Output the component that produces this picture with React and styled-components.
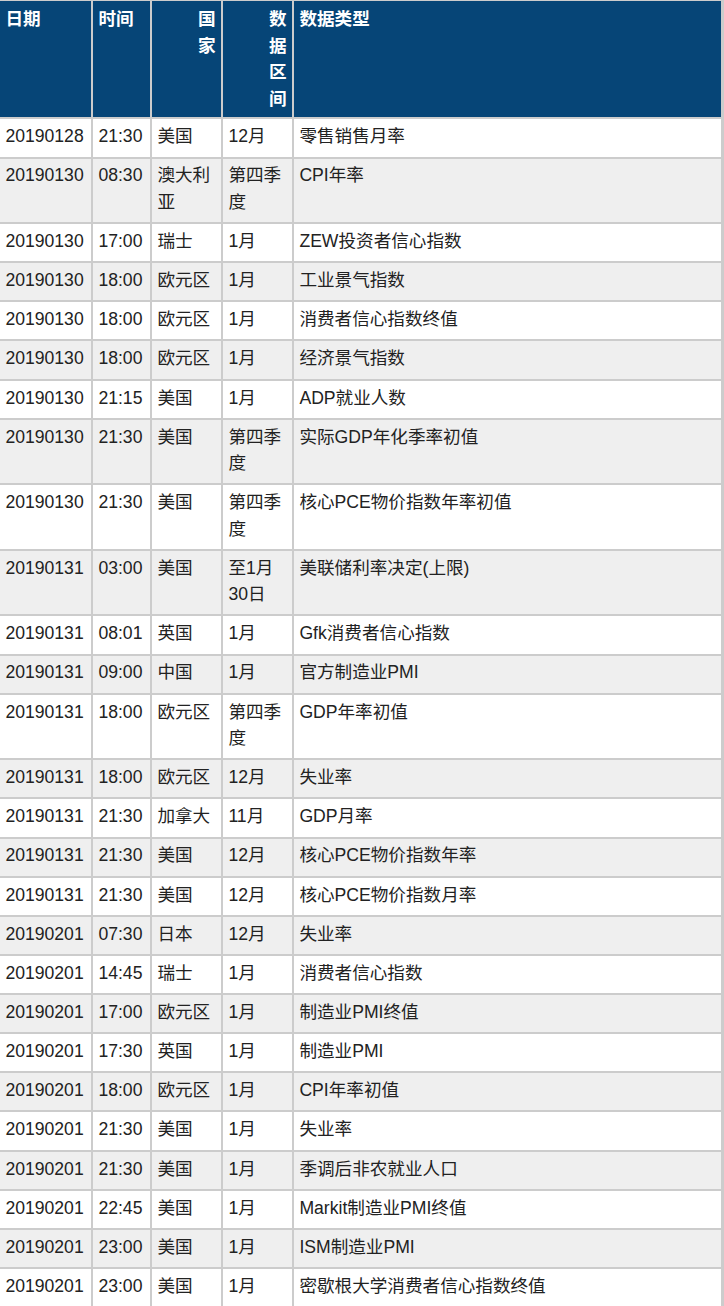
import styled, { createGlobalStyle } from 'styled-components';

const rows = [
  ['20190128', '21:30', '美国', '12月', '零售销售月率'],
  ['20190130', '08:30', '澳大利亚', '第四季度', 'CPI年率'],
  ['20190130', '17:00', '瑞士', '1月', 'ZEW投资者信心指数'],
  ['20190130', '18:00', '欧元区', '1月', '工业景气指数'],
  ['20190130', '18:00', '欧元区', '1月', '消费者信心指数终值'],
  ['20190130', '18:00', '欧元区', '1月', '经济景气指数'],
  ['20190130', '21:15', '美国', '1月', 'ADP就业人数'],
  ['20190130', '21:30', '美国', '第四季度', '实际GDP年化季率初值'],
  ['20190130', '21:30', '美国', '第四季度', '核心PCE物价指数年率初值'],
  ['20190131', '03:00', '美国', '至1月30日', '美联储利率决定(上限)'],
  ['20190131', '08:01', '英国', '1月', 'Gfk消费者信心指数'],
  ['20190131', '09:00', '中国', '1月', '官方制造业PMI'],
  ['20190131', '18:00', '欧元区', '第四季度', 'GDP年率初值'],
  ['20190131', '18:00', '欧元区', '12月', '失业率'],
  ['20190131', '21:30', '加拿大', '11月', 'GDP月率'],
  ['20190131', '21:30', '美国', '12月', '核心PCE物价指数年率'],
  ['20190131', '21:30', '美国', '12月', '核心PCE物价指数月率'],
  ['20190201', '07:30', '日本', '12月', '失业率'],
  ['20190201', '14:45', '瑞士', '1月', '消费者信心指数'],
  ['20190201', '17:00', '欧元区', '1月', '制造业PMI终值'],
  ['20190201', '17:30', '英国', '1月', '制造业PMI'],
  ['20190201', '18:00', '欧元区', '1月', 'CPI年率初值'],
  ['20190201', '21:30', '美国', '1月', '失业率'],
  ['20190201', '21:30', '美国', '1月', '季调后非农就业人口'],
  ['20190201', '22:45', '美国', '1月', 'Markit制造业PMI终值'],
  ['20190201', '23:00', '美国', '1月', 'ISM制造业PMI'],
  ['20190201', '23:00', '美国', '1月', '密歇根大学消费者信心指数终值'],
];

const Global = createGlobalStyle`
  html, body {
    margin: 0;
    padding: 0;
    background: #fff;
    overflow: hidden;
  }
`;

const Table = styled.table`
  width: 727px;
  margin: -2px 0 0 -3px;
  table-layout: fixed;
  border: 1px solid #cccccc;
  border-spacing: 2px;
  background: #cccccc;
  font-family: "Liberation Sans", "Noto Sans CJK SC", sans-serif;
  font-size: 17.6px;
  line-height: 26.4px;
  color: #222;
`;

const HeadCell = styled.th`
  box-sizing: border-box;
  width: ${p => p.$width || 'auto'};
  padding: 5.4px 5.4px 5.35px;
  background: #064577;
  color: #fff;
  font-weight: bold;
  text-align: ${p => p.$right ? 'right' : 'left'};
  vertical-align: top;
`;

const Stacked = styled.span`
  display: block;
  width: 1em;
  margin-left: auto;
`;

const Row = styled.tr`
  background: ${p => p.$shade ? '#efefef' : '#ffffff'};
`;

const Cell = styled.td`
  padding: 3.9px 5.4px 6.85px;
  vertical-align: top;
  text-align: left;
`;

export default function App() {
  return (
    <>
      <Global />
      <Table>
        <thead>
          <tr>
            <HeadCell $width="91px">日期</HeadCell>
            <HeadCell $width="57px">时间</HeadCell>
            <HeadCell $width="69px" $right><Stacked>国家</Stacked></HeadCell>
            <HeadCell $width="69px" $right><Stacked>数据区间</Stacked></HeadCell>
            <HeadCell>数据类型</HeadCell>
          </tr>
        </thead>
        <tbody>
          {rows.map((r, i) => (
            <Row key={i} $shade={i % 2 === 1}>
              {r.map((v, j) => <Cell key={j}>{v}</Cell>)}
            </Row>
          ))}
        </tbody>
      </Table>
    </>
  );
}
